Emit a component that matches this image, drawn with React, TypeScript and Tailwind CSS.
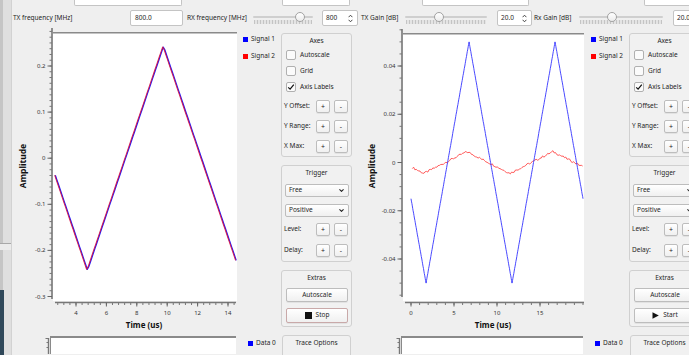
import React from "react";
import { ChevronDown } from "lucide-react";

// helpers for the two scope plots
const range = (a: number, b: number, step: number) => {
  const out: number[] = [];
  for (let i = Math.ceil(a / step - 1e-6); i * step <= b + 1e-6; i++) out.push(i * step);
  return out;
};

const tri = (x: number, xMin: number, amp: number) => {
  const p = ((((x - xMin) % 10) + 10) % 10) / 10;
  return p < 0.5 ? -amp + 4 * amp * p : amp - 4 * amp * (p - 0.5);
};

const noise = (i: number) => {
  const s = Math.sin(i * 12.9898) * 43758.5453;
  return s - Math.floor(s) - 0.5;
};

type Series = { points: string; color: string; width: number; opacity?: number };

interface PlotCfg {
  id: string;
  left: number;
  width: number;
  canvas: [number, number, number, number];
  yAxisX: number;
  yAxisTop: number;
  yAxisBottom: number;
  yPx: (v: number) => number;
  yMinor: number[];
  yMajor: [number, string][];
  xAxisY: number;
  xAxisLeft: number;
  xAxisRight: number;
  xPx: (v: number) => number;
  xMinor: number[];
  xMajor: [number, string][];
  series: Series[];
  ampX: number;
  timeX: number;
}

function Plot({ cfg }: { cfg: PlotCfg }) {
  const [cx1, cy1, cx2, cy2] = cfg.canvas;
  return (
    <svg
      width={cfg.width}
      height={305}
      viewBox={`${cfg.left} 28 ${cfg.width} 305`}
      className="block shrink-0 font-['Noto_Sans','Open_Sans',sans-serif]"
    >
      <defs>
        <clipPath id={cfg.id}>
          <rect x={cx1} y={cy1} width={cx2 - cx1} height={cy2 - cy1} />
        </clipPath>
      </defs>
      <rect x={cx1} y={cy1} width={cx2 - cx1} height={cy2 - cy1} fill="#ffffff" />
      <line x1={cx1} x2={cx2} y1={cy1 + 0.75} y2={cy1 + 0.75} stroke="#8a8a8a" strokeWidth={1.5} />

      <g clipPath={`url(#${cfg.id})`} fill="none" strokeLinejoin="round">
        {cfg.series.map((s, i) => (
          <polyline key={i} points={s.points} stroke={s.color} strokeWidth={s.width} opacity={s.opacity ?? 1} />
        ))}
      </g>

      {/* y axis */}
      <line x1={cfg.yAxisX} x2={cfg.yAxisX} y1={cfg.yAxisTop} y2={cfg.yAxisBottom} stroke="#777" strokeWidth={1.6} />
      {cfg.yMinor.map((v) => (
        <line key={v} x1={cfg.yAxisX - 2.5} x2={cfg.yAxisX} y1={cfg.yPx(v)} y2={cfg.yPx(v)} stroke="#777" strokeWidth={1} />
      ))}
      {cfg.yMajor.map(([v, label]) => (
        <g key={label}>
          <line x1={cfg.yAxisX - 4.5} x2={cfg.yAxisX} y1={cfg.yPx(v)} y2={cfg.yPx(v)} stroke="#666" strokeWidth={1} />
          <text x={cfg.yAxisX - 6.5} y={cfg.yPx(v)} textAnchor="end" dominantBaseline="central" fontSize={6} fill="#333">
            {label}
          </text>
        </g>
      ))}

      {/* x axis */}
      <line x1={cfg.xAxisLeft} x2={cfg.xAxisRight} y1={cfg.xAxisY} y2={cfg.xAxisY} stroke="#777" strokeWidth={1.6} />
      {cfg.xMinor.map((v) => (
        <line key={v} x1={cfg.xPx(v)} x2={cfg.xPx(v)} y1={cfg.xAxisY} y2={cfg.xAxisY + 2.5} stroke="#777" strokeWidth={1} />
      ))}
      {cfg.xMajor.map(([v, label]) => (
        <g key={label}>
          <line x1={cfg.xPx(v)} x2={cfg.xPx(v)} y1={cfg.xAxisY} y2={cfg.xAxisY + 4} stroke="#666" strokeWidth={1} />
          <text x={cfg.xPx(v)} y={314} textAnchor="middle" dominantBaseline="central" fontSize={6} fill="#333">
            {label}
          </text>
        </g>
      ))}

      <text x={cfg.timeX} y={325} textAnchor="middle" dominantBaseline="central" fontSize={8} fontWeight={700} fill="#111">
        Time (us)
      </text>
      <text
        transform={`translate(${cfg.ampX} 167) rotate(-90)`}
        textAnchor="middle"
        dominantBaseline="central"
        fontSize={8.5}
        fontWeight={700}
        fill="#111"
      >
        Amplitude
      </text>
    </svg>
  );
}

// plot 1 : both signals on top of each other
const y1 = (v: number) => 159.2 - v * 461;
const x1 = (v: number) => 76 + (v - 4) * 15.2;
const xs1 = range(2.55, 14.55, 0.1);
const tri1 = (x: number) => tri(x, 4.72, 0.243);

const plot1: PlotCfg = {
  id: "clip-a",
  left: 12,
  width: 228,
  canvas: [53, 33, 237, 302],
  yAxisX: 52,
  yAxisTop: 29,
  yAxisBottom: 300,
  yPx: y1,
  yMinor: range(-0.3, 0.28, 0.0125),
  yMajor: [
    [0.2, "0.2"],
    [0.1, "0.1"],
    [0, "0"],
    [-0.1, "-0.1"],
    [-0.2, "-0.2"],
    [-0.3, "-0.3"],
  ],
  xAxisY: 303.5,
  xAxisLeft: 55,
  xAxisRight: 236,
  xPx: x1,
  xMinor: range(2.8, 14.4, 0.4),
  xMajor: [
    [4, "4"],
    [6, "6"],
    [8, "8"],
    [10, "10"],
    [12, "12"],
    [14, "14"],
  ],
  series: [
    { points: xs1.map((x) => `${(x1(x) + 0.6).toFixed(1)},${y1(tri1(x)).toFixed(1)}`).join(" "), color: "#1a1aff", width: 1.3 },
    { points: xs1.map((x) => `${x1(x).toFixed(1)},${y1(tri1(x)).toFixed(1)}`).join(" "), color: "#e0103a", width: 1.1, opacity: 0.85 },
  ],
  ampX: 22,
  timeX: 144,
};

// plot 2 : big blue triangle, small noisy red one
const y2 = (v: number) => 163.5 - v * 2412.5;
const x2 = (v: number) => 411 + v * 8.6;
const xs2 = range(0, 20, 0.05);
const xs2r = range(0.1, 20, 0.15);

const plot2: PlotCfg = {
  id: "clip-b",
  left: 352,
  width: 233,
  canvas: [403, 34, 584, 302],
  yAxisX: 402,
  yAxisTop: 30,
  yAxisBottom: 298,
  yPx: y2,
  yMinor: range(-0.055, 0.055, 0.005),
  yMajor: [
    [0.04, "0.04"],
    [0.02, "0.02"],
    [0, "0"],
    [-0.02, "-0.02"],
    [-0.04, "-0.04"],
  ],
  xAxisY: 303.5,
  xAxisLeft: 405,
  xAxisRight: 584,
  xPx: x2,
  xMinor: range(0, 20, 1),
  xMajor: [
    [0, "0"],
    [5, "5"],
    [10, "10"],
    [15, "15"],
  ],
  series: [
    {
      points: xs2r.map((x, i) => `${x2(x).toFixed(1)},${y2(tri(x, 1.5, 0.0045) + noise(i) * 0.0009).toFixed(1)}`).join(" "),
      color: "#ff4646",
      width: 0.9,
    },
    { points: xs2.map((x) => `${x2(x).toFixed(1)},${y2(tri(x, 1.75, 0.05)).toFixed(1)}`).join(" "), color: "#3434ff", width: 0.9 },
  ],
  ampX: 371,
  timeX: 493,
};

// ---- small widgets ----

function Slider({ width, handle, box }: { width: number; handle: number; box: number }) {
  return (
    <div className="h-[18px] shrink-0" style={{ width: box }}>
      <div className="relative h-[18px]" style={{ width }}>
        <div className="absolute left-0 right-0 top-[7px] h-[2px] rounded-full bg-[#cfcfcf]" />
        <div className="absolute left-[1px] right-[1px] top-[11px] h-[4px] bg-[repeating-linear-gradient(90deg,#c4c4c4_0_1px,#e4e4e4_1px_3px)]" />
        <div
          className="absolute top-[3px] h-[10px] w-[10px] rounded-full border border-[#a2a2a2] bg-linear-to-b from-white to-[#ececec]"
          style={{ left: handle - 5 }}
        />
      </div>
    </div>
  );
}

function SpinArrows() {
  return (
    <svg width="5" height="9" viewBox="0 0 5 9" className="shrink-0">
      <path d="M0.6 3.2 L2.5 1.2 L4.4 3.2" fill="none" stroke="#333" strokeWidth="0.9" />
      <path d="M0.6 5.8 L2.5 7.8 L4.4 5.8" fill="none" stroke="#333" strokeWidth="0.9" />
    </svg>
  );
}

function SpinBox({ value, width }: { value: string; width: number }) {
  return (
    <div
      className="flex h-[16px] shrink-0 items-center justify-between rounded-[2px] border border-[#c4c4c4] bg-white pl-[3px] pr-[4px]"
      style={{ width }}
    >
      <span>{value}</span>
      <SpinArrows />
    </div>
  );
}

function Group({ title, className, children }: { title: string; className?: string; children?: React.ReactNode }) {
  return (
    <div className={`shrink-0 rounded-[3px] border border-[#d0d0d0] bg-[#f1f1f1] ${className ?? ""}`}>
      <div className="h-[13px] pt-[1px] text-center leading-[12px]">{title}</div>
      {children}
    </div>
  );
}

function Btn({ children, className }: { children: React.ReactNode; className?: string }) {
  return (
    <div
      className={`flex items-center justify-center rounded-[2px] border border-[#bdbdbd] bg-linear-to-b from-white to-[#f0f0f0] shadow-[0_1px_0_rgba(0,0,0,0.06)] ${className ?? ""}`}
    >
      {children}
    </div>
  );
}

function PlusMinusRow({ label, h }: { label: string; h: number }) {
  return (
    <div className="flex items-center pl-[2px]" style={{ height: h }}>
      <span className="w-[32px] shrink-0">{label}</span>
      <Btn className="h-[13px] w-[14px] text-[7px]">+</Btn>
      <Btn className="ml-[4px] h-[13px] w-[14px] text-[7px]">-</Btn>
    </div>
  );
}

function Check({ label, checked }: { label: string; checked?: boolean }) {
  return (
    <div className="flex h-[16px] items-center pl-[4px]">
      <div className="flex h-[10px] w-[10px] items-center justify-center rounded-[2px] border border-[#b0b0b0] bg-[#fbfbfb]">
        {checked && (
          <svg width="8" height="8" viewBox="0 0 8 8">
            <path d="M1.2 4.3 L3.1 6.2 L6.8 1.6" fill="none" stroke="#111" strokeWidth="1.2" />
          </svg>
        )}
      </div>
      <span className="ml-[4px]">{label}</span>
    </div>
  );
}

function Combo({ value }: { value: string }) {
  return (
    <div className="ml-[3px] flex h-[13px] w-[64px] items-center justify-between rounded-[2px] border border-[#bdbdbd] bg-linear-to-b from-white to-[#f0f0f0] pl-[3px] pr-[3px]">
      <span>{value}</span>
      <ChevronDown size={7} strokeWidth={3.5} color="#222" />
    </div>
  );
}

function ControlPanel({ running }: { running: boolean }) {
  return (
    <div className="flex w-[71px] shrink-0 flex-col pt-[6px]">
      <Group title="Axes" className="h-[124px]">
        <Check label="Autoscale" />
        <Check label="Grid" />
        <Check label="Axis Labels" checked />
        <div className="h-[1px]" />
        <PlusMinusRow label="Y Offset:" h={20} />
        <PlusMinusRow label="Y Range:" h={20} />
        <PlusMinusRow label="X Max:" h={20} />
      </Group>
      <Group title="Trigger" className="mt-[8px] h-[97px]">
        <div className="mt-[5px]">
          <Combo value="Free" />
        </div>
        <div className="mt-[7px]">
          <Combo value="Positive" />
        </div>
        <div className="mt-[2px]">
          <PlusMinusRow label="Level:" h={21} />
          <PlusMinusRow label="Delay:" h={21} />
        </div>
      </Group>
      <Group title="Extras" className="mt-[8px] h-[57px]">
        <Btn className="ml-[4px] mt-[4px] h-[14px] w-[62px]">Autoscale</Btn>
        <Btn
          className={`ml-[4px] mt-[6px] h-[15px] w-[62px] gap-[4px] ${running ? "border-[#c9a9a9]" : ""}`}
        >
          {running ? (
            <span className="h-[7px] w-[7px] bg-[#111]" />
          ) : (
            <svg width="7" height="7" viewBox="0 0 7 7">
              <path d="M0.5 0.3 L6.8 3.5 L0.5 6.7 Z" fill="#111" />
            </svg>
          )}
          <span>{running ? "Stop" : "Start"}</span>
        </Btn>
      </Group>
    </div>
  );
}

function Legend({ pl }: { pl: number }) {
  return (
    <div className="flex shrink-0 flex-col pt-[4px]" style={{ paddingLeft: pl }}>
      <div className="flex h-[17px] items-center gap-[3px]">
        <span className="h-[5px] w-[5px] bg-[#0000ff]" />
        <span>Signal 1</span>
      </div>
      <div className="flex h-[17px] items-center gap-[3px]">
        <span className="h-[5px] w-[5px] bg-[#ff0000]" />
        <span>Signal 2</span>
      </div>
    </div>
  );
}

function LowerPlotStub({ width, offset, frameWidth }: { width: number; offset: number; frameWidth: number }) {
  return (
    <div className="flex h-[22px] shrink-0 pt-[4px]" style={{ width, paddingLeft: offset }}>
      <svg width="5" height="18" viewBox="0 0 5 18" className="shrink-0">
        <line x1="3.5" x2="3.5" y1="2" y2="18" stroke="#777" strokeWidth="1.4" />
        <line x1="0.5" x2="3.5" y1="2.5" y2="2.5" stroke="#777" strokeWidth="1" />
        <line x1="1.5" x2="3.5" y1="6.5" y2="6.5" stroke="#777" strokeWidth="1" />
        <line x1="1.5" x2="3.5" y1="11.5" y2="11.5" stroke="#777" strokeWidth="1" />
      </svg>
      <div className="h-[18px] shrink-0 border-l border-t-2 border-[#8a8a8a] bg-white" style={{ width: frameWidth }} />
    </div>
  );
}

export default function App() {
  return (
    <div className="flex h-[355px] w-[689px] overflow-hidden bg-[#efefef] font-['Noto_Sans','Open_Sans',sans-serif] text-[6.5px] leading-none text-[#262626]">
      {/* left strip of the window behind */}
      <div className="flex w-[12px] shrink-0 flex-col border-r border-[#d2d2d2] bg-[#dfdfdf]">
        <div className="flex h-[243px]">
          <div className="w-[3px] bg-[#c5c5c5]" />
        </div>
        <div className="h-[1px] bg-[#a8a8a8]" />
        <div className="h-[6px] bg-[#ebebeb]" />
        <div className="flex h-[40px]">
          <div className="w-[3px] bg-[#c5c5c5]" />
        </div>
        <div className="flex flex-1">
          <div className="w-[4px] bg-[#2f4859]" />
        </div>
      </div>

      <div className="flex min-w-0 flex-1 flex-col">
        {/* inputs of the row above, cut off */}
        <div className="flex h-[7px] shrink-0">
          <div className="ml-[62px] h-[6px] w-[108px] shrink-0 rounded-b-[2px] border border-t-0 border-[#c4c4c4] bg-white" />
          <div className="ml-[100px] h-[6px] w-[68px] shrink-0 rounded-b-[2px] border border-t-0 border-[#c4c4c4] bg-white" />
          <div className="ml-[72px] h-[6px] w-[107px] shrink-0 rounded-b-[2px] border border-t-0 border-[#c4c4c4] bg-white" />
          <div className="ml-[115px] h-[6px] w-[60px] shrink-0 rounded-b-[2px] border border-t-0 border-[#c4c4c4] bg-white" />
        </div>

        {/* frequency / gain row */}
        <div className="mt-[2px] flex h-[18px] shrink-0 items-center">
          <span className="w-[118px] shrink-0 pl-[1px]">TX frequency [MHz]</span>
          <div className="flex h-[16px] w-[53px] shrink-0 items-center rounded-[2px] border border-[#c4c4c4] bg-white pl-[4px]">
            800.0
          </div>
          <span className="w-[70px] shrink-0 pl-[4px]">RX frequency [MHz]</span>
          <Slider width={60} handle={47} box={69} />
          <SpinBox value="800" width={36} />
          <span className="w-[47px] shrink-0 pl-[3px]">TX Gain [dB]</span>
          <Slider width={82} handle={34} box={92} />
          <SpinBox value="20.0" width={35} />
          <span className="w-[47px] shrink-0 pl-[2px]">Rx Gain [dB]</span>
          <Slider width={84} handle={33} box={94} />
          <SpinBox value="20.0" width={36} />
        </div>

        {/* scopes */}
        <div className="flex h-[305px] shrink-0">
          <Plot cfg={plot1} />
          <div className="w-[41px] shrink-0">
            <Legend pl={3} />
          </div>
          <ControlPanel running />
          <Plot cfg={plot2} />
          <div className="w-[44px] shrink-0">
            <Legend pl={6} />
          </div>
          <ControlPanel running={false} />
        </div>

        {/* lower scopes, cut off */}
        <div className="flex h-[22px] shrink-0">
          <LowerPlotStub width={228} offset={33} frameWidth={186} />
          <div className="flex w-[41px] shrink-0 items-start pl-[8px] pt-[8px]">
            <div className="flex h-[6px] items-center gap-[3px]">
              <span className="h-[5px] w-[5px] bg-[#0000ff]" />
              <span>Data 0</span>
            </div>
          </div>
          <div className="w-[71px] shrink-0 pl-[1px] pt-[3px]">
            <Group title="Trace Options" className="h-[30px] w-[69px]" />
          </div>
          <LowerPlotStub width={233} offset={44} frameWidth={182} />
          <div className="flex w-[44px] shrink-0 items-start pl-[10px] pt-[8px]">
            <div className="flex h-[6px] items-center gap-[3px]">
              <span className="h-[5px] w-[5px] bg-[#0000ff]" />
              <span>Data 0</span>
            </div>
          </div>
          <div className="w-[71px] shrink-0 pl-[1px] pt-[3px]">
            <Group title="Trace Options" className="h-[30px] w-[69px]" />
          </div>
        </div>
      </div>
    </div>
  );
}
